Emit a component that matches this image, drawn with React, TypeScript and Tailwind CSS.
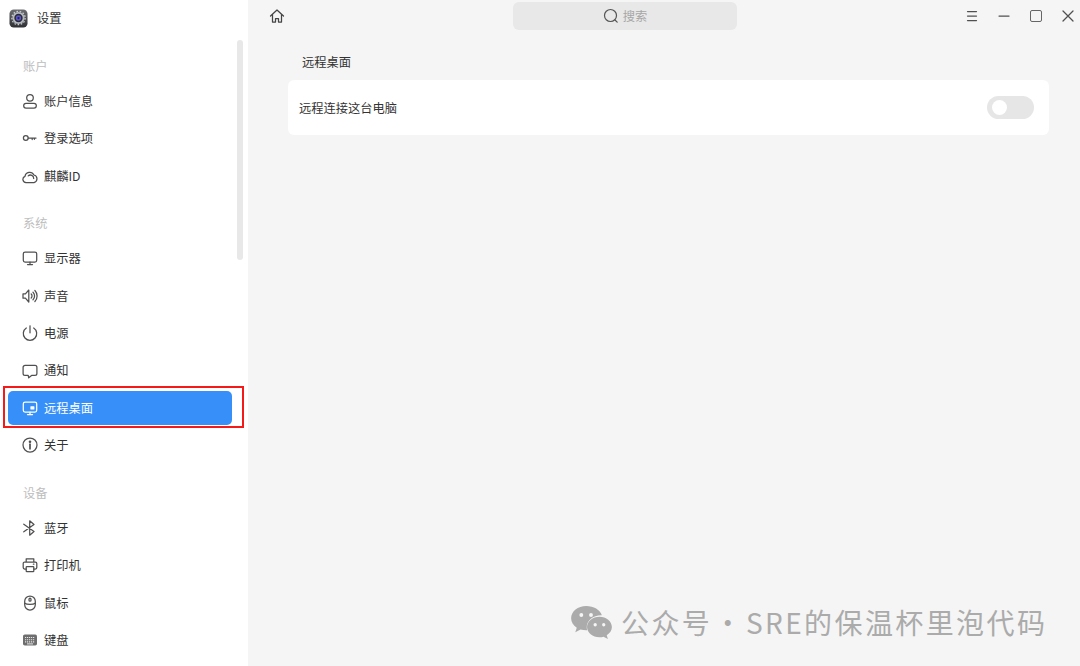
import React from 'react';

const cjk = "font-['Noto_Sans_CJK_SC','Noto_Sans',sans-serif]";

const Ico: React.FC<{ children: React.ReactNode; className?: string }> = ({ children, className }) => (
  <svg viewBox="0 0 16 16" fill="none" stroke="currentColor" strokeWidth="1.25" strokeLinecap="round" strokeLinejoin="round" className={className ?? 'w-4 h-4'}>
    {children}
  </svg>
);

const icons: Record<string, React.ReactNode> = {
  user: <Ico><circle cx="8" cy="4.800" r="3.300" /><rect x="1.700" y="10.300" width="12.600" height="4.700" rx="2.300" /></Ico>,
  key: <Ico><circle cx="3.800" cy="8" r="2.400" /><path d="M6.200 8H14M10.200 8v1.500M12.400 8v1.300" /></Ico>,
  cloud: <Ico><path d="M4 14.600a3.200 3.200 0 0 1-1-6.200 4.700 4.700 0 0 1 8.900-1.400 3.900 3.900 0 0 1 .1 7.600z" /><path d="M6.200 7.900a3.300 3.300 0 0 1 5.500 2.600" /></Ico>,
  monitor: <Ico><rect x="1.300" y="2" width="13.400" height="10" rx="1.800" /><path d="M5.500 14.500h5M8 12v2.500" /></Ico>,
  sound: <Ico><path d="M1 5.800v4.400h2.400L6.800 14V2L3.400 5.800z" /><path d="M9.200 6a2.800 2.800 0 0 1 0 4M11 4.200a5.400 5.400 0 0 1 0 7.600M12.900 2.500a8 8 0 0 1 0 11" /></Ico>,
  power: <Ico><path d="M8 .8v7" /><path d="M4.300 3a6.700 6.700 0 1 0 7.400 0" /></Ico>,
  chat: <Ico><path d="M3 2.400h10a1.900 1.900 0 0 1 1.900 1.900v6.200a1.900 1.900 0 0 1-1.900 1.900H9.600l-2.900 2.400-.5-2.400H3a1.900 1.900 0 0 1-1.900-1.900V4.300A1.900 1.900 0 0 1 3 2.400z" /></Ico>,
  remote: (
    <Ico>
      <rect x="1.300" y="2" width="13.400" height="10" rx="1.800" />
      <path d="M5.500 14.500h5M8 12v2.500" />
      <rect x="8.400" y="6.200" width="4" height="3.400" rx=".6" fill="currentColor" stroke="none" />
    </Ico>
  ),
  info: <Ico><circle cx="8" cy="8" r="7" /><path d="M8 7.200v4.600" strokeWidth="1.700" /><circle cx="8" cy="4.700" r=".7" fill="currentColor" /></Ico>,
  bluetooth: <Ico><path d="M1.800 4.200l10.200 7.400-4.300 3.600V.8L12 4.400 1.800 11.800" /></Ico>,
  printer: <Ico><path d="M4.200 5V1.800h7.600V5M4.200 12H2.600a1.400 1.400 0 0 1-1.400-1.400V6.400A1.400 1.400 0 0 1 2.600 5h10.800a1.400 1.400 0 0 1 1.400 1.400v4.200a1.400 1.400 0 0 1-1.400 1.400h-1.600" /><rect x="4.200" y="9.600" width="7.600" height="5" rx=".7" /><path d="M11.400 7.200h.5" /></Ico>,
  mouse: <Ico><rect x="2.700" y="1" width="10.600" height="14" rx="5.300" /><path d="M2.900 8.300c1.600 1.400 8.600 1.400 10.200 0" /><rect x="7" y="3.200" width="2" height="3" rx="1" /></Ico>,
  keyboard: (
    <svg viewBox="0 0 16 16" className="w-4 h-4">
      <rect x="1" y="2.500" width="14" height="11" rx="1.800" fill="#6e6e6e" />
      <path d="M3 5.500h10M3 7.700h10M3 9.900h10" stroke="#e6e6e6" strokeWidth="1.100" strokeDasharray="1.200 .8" />
      <path d="M5 11.900h6" stroke="#e6e6e6" strokeWidth="1" />
    </svg>
  ),
};

const groups = [
  {
    label: '账户',
    items: [
      ['user', '账户信息'],
      ['key', '登录选项'],
      ['cloud', '麒麟ID'],
    ],
  },
  {
    label: '系统',
    items: [
      ['monitor', '显示器'],
      ['sound', '声音'],
      ['power', '电源'],
      ['chat', '通知'],
      ['remote', '远程桌面'],
      ['info', '关于'],
    ],
  },
  {
    label: '设备',
    items: [
      ['bluetooth', '蓝牙'],
      ['printer', '打印机'],
      ['mouse', '鼠标'],
      ['keyboard', '键盘'],
    ],
  },
];

const AppIcon = () => (
  <svg viewBox="0 0 20 20" className="w-[19px] h-[19px]">
    <defs>
      <linearGradient id="appbg" x1="0" y1="0" x2="0" y2="1">
        <stop offset="0" stopColor="#6b6c70" />
        <stop offset="1" stopColor="#2f3034" />
      </linearGradient>
    </defs>
    <rect x="0.500" y="0.500" width="19" height="19" rx="4.500" fill="url(#appbg)" />
    <circle cx="10" cy="9.500" r="6.400" fill="#b4b8be" />
    <circle cx="10" cy="9.500" r="7" fill="none" stroke="#c8ccd0" strokeWidth="1.300" strokeDasharray="1.700 1.700" />
    <circle cx="10" cy="9.500" r="4.400" fill="#2a2a32" />
    <circle cx="10" cy="9.500" r="2.800" fill="#5a55c8" />
    <circle cx="10" cy="9.500" r="1.200" fill="#23234a" />
  </svg>
);

const WeChat = () => (
  <svg viewBox="0 0 42 34" className="w-[41px] h-[33px]" fill="#ababab">
    <path d="M15.500 0C7 0 0 5.600 0 12.600c0 4 2.200 7.400 5.800 9.700L4.300 27l5.400-2.900c1.800.5 3.800.8 5.800.8h1a11 11 0 0 1-.4-3c0-6.900 6.600-12.400 14.700-12.400h.9C29.800 4 23.300 0 15.500 0z" />
    <path d="M42 21.600c0-5.900-5.800-10.600-12.800-10.600S16.400 15.700 16.400 21.600s5.800 10.600 12.800 10.600c1.500 0 2.900-.2 4.200-.6l4.500 2.400-1.200-3.900c3.200-2 5.300-5 5.300-8.500z" />
    <circle cx="10.500" cy="9.300" r="2" fill="#f5f5f5" />
    <circle cx="20.500" cy="9.300" r="2" fill="#f5f5f5" />
    <circle cx="24.800" cy="19.300" r="1.700" fill="#f5f5f5" />
    <circle cx="33.600" cy="19.300" r="1.700" fill="#f5f5f5" />
  </svg>
);

export default function App() {
  return (
    <div className={`relative flex w-[1080px] h-[666px] overflow-hidden bg-[#f5f5f5] text-[12.25px] text-[#333333] ${cjk}`}>
      {/* sidebar */}
      <aside className="relative w-[248px] shrink-0 bg-white overflow-hidden">
        <div className="flex items-center h-9 pl-[9px] gap-[9px]">
          <AppIcon />
          <span>设置</span>
        </div>
        <div className="mt-[12.25px]">
          {groups.map((g, i) => (
            <div key={g.label} className={i > 0 ? 'mt-[11px]' : ''}>
              <div className="flex items-center h-[34px] pl-[23px] pt-[1px] text-[#bdbdbd]">{g.label}</div>
              {g.items.map(([icon, name]) => {
                const active = name === '远程桌面';
                return (
                  <div key={name} className="flex items-center h-[37.45px] pl-2 w-[232px]">
                    <div className={`flex items-center w-full h-[34px] rounded-[5px] pl-[14px] gap-[6px] ${active ? 'bg-[#3790fa] text-white' : ''}`}>
                      <span className={active ? 'text-white' : 'text-[#505050]'}>{icons[icon]}</span>
                      <span>{name}</span>
                    </div>
                  </div>
                );
              })}
            </div>
          ))}
        </div>
        {/* scrollbar */}
        <div className="absolute left-[237px] top-[40px] w-[6px] h-[220px] rounded-full bg-[#e8e8e8]" />
        {/* annotation box */}
        <div className="absolute left-[3px] top-[386px] w-[241px] h-[42px] border-2 border-[#f51a1a]" />
      </aside>

      {/* content */}
      <main className="flex-1 min-w-0">
        <header className="flex items-center h-8 pl-[21px]">
          <Ico className="w-[16px] h-[16px] text-[#444444]">
            <path d="M1.500 8 8 2l6.500 6M3.500 6.500V14h3v-3.500h3V14h3V6.500" />
          </Ico>
          <div className="flex-1 flex justify-center pl-[5px]">
            <div className="flex items-center justify-center gap-[4px] w-[224px] h-[28px] rounded-[6px] bg-[#e8e8e8] text-[#a6a6a6]">
              <svg viewBox="0 0 16 16" fill="none" stroke="#555555" strokeWidth="1.200" strokeLinecap="round" className="w-4 h-4">
                <circle cx="7.500" cy="7.500" r="6" />
                <path d="M12 12l2.200 2.200" />
              </svg>
              <span>搜索</span>
            </div>
          </div>
          <div className="flex items-center gap-2 text-[#505050]">
            <span className="flex items-center justify-center w-6 h-8">
              <Ico><path d="M3.500 3.500h9M3.500 8h9M3.500 12.500h9" /></Ico>
            </span>
            <span className="flex items-center justify-center w-6 h-8">
              <Ico><path d="M3 8h10" /></Ico>
            </span>
            <span className="flex items-center justify-center w-6 h-8">
              <span className="w-3 h-3 rounded-[2px] border-[1.500px] border-[#666666]" />
            </span>
            <span className="flex items-center justify-center w-6 h-8">
              <Ico><path d="M3 3l10 10M13 3 3 13" /></Ico>
            </span>
          </div>
        </header>
        <div className="pl-[40px] pr-[31px]">
          <div className="flex items-center h-[48px] pl-[14px] pt-[12px]">远程桌面</div>
          <div className="flex items-center justify-between h-[55px] rounded-[6px] bg-white pl-[11px] pr-[15px]">
            <span className="pt-[1px]">远程连接这台电脑</span>
            <div className="flex items-center w-[47px] h-[23px] rounded-full bg-[#e6e6e6] pl-[5px]">
              <div className="w-[15px] h-[15px] rounded-full bg-white" />
            </div>
          </div>
        </div>
      </main>

      {/* watermark */}
      <div className="absolute left-[571px] top-[604px] flex items-center gap-[9px] text-[#ababab]">
        <WeChat />
        <span className="text-[28px] leading-[36px] tracking-[2.400px] [word-spacing:-7px] whitespace-nowrap">公众号 · SRE的保温杯里泡代码</span>
      </div>
    </div>
  );
}
